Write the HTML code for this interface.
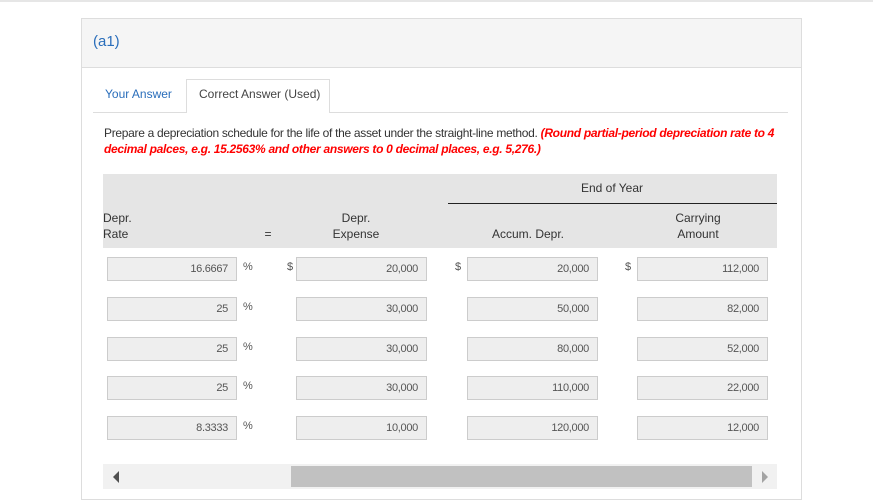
<!DOCTYPE html>
<html><head><style>
body{margin:0;width:873px;height:496px;background:#fff;font-family:"Liberation Sans",sans-serif;position:relative;overflow:hidden}
.a{position:absolute}
.in{position:absolute;height:22px;background:#eee;border:1px solid #ccc;font-size:11px;color:#555;text-align:right;line-height:22px;padding-right:8px;box-sizing:content-box;letter-spacing:-0.3px}
.s{position:absolute;font-size:11px;color:#555}
.h{position:absolute;font-size:12px;color:#333;text-align:center;line-height:16px}
</style></head><body>
<div class="a" style="left:0;top:0;width:873px;height:2px;background:#e6e6e6"></div>
<div class="a" style="left:81px;top:18px;width:719px;height:480px;border:1px solid #ddd;background:#fff"></div>
<div class="a" style="left:82px;top:19px;width:719px;height:48px;background:#f5f5f5;border-bottom:1px solid #ddd"></div>
<div class="a" style="left:93px;top:33px;font-size:15px;color:#2a6ebb">(a1)</div>
<div class="a" style="left:105px;top:87px;font-size:12px;color:#2a6ebb">Your Answer</div>
<div class="a" style="left:186px;top:79px;width:144px;height:34px;border:1px solid #ddd;border-bottom:none;background:#fff;box-sizing:border-box;z-index:2"></div>
<div class="a" style="left:199px;top:87px;font-size:12px;color:#444;z-index:3">Correct Answer (Used)</div>
<div class="a" style="left:93px;top:112px;width:695px;height:1px;background:#ddd"></div>
<div class="a" style="left:104px;top:125px;width:676px;font-size:12px;line-height:16px;color:#333;letter-spacing:-0.3px">Prepare a depreciation schedule for the life of the asset under the straight-line method. <b><i style="color:#f00">(Round partial-period depreciation rate to 4 decimal palces, e.g. 15.2563% and other answers to 0 decimal places, e.g. 5,276.)</i></b></div>
<div class="a" style="left:103px;top:174px;width:674px;height:74px;background:#e5e5e5"></div>
<div class="a" style="left:448px;top:203px;width:329px;height:1px;background:#222"></div>
<div class="h" style="left:562px;top:180px;width:100px">End of Year</div>
<div class="h" style="left:103px;top:210px;text-align:left">Depr.<br>Rate</div>
<div class="h" style="left:258px;top:226px;width:20px">=</div>
<div class="h" style="left:316px;top:210px;width:80px">Depr.<br>Expense</div>
<div class="h" style="left:478px;top:226px;width:100px">Accum. Depr.</div>
<div class="h" style="left:658px;top:210px;width:80px">Carrying<br>Amount</div>
<div class="s" style="left:287px;top:261px">$</div>
<div class="s" style="left:455px;top:261px">$</div>
<div class="s" style="left:625px;top:261px">$</div>
<div class="in" style="left:107px;top:257px;width:120px">16.6667</div>
<div class="in" style="left:296px;top:257px;width:121px">20,000</div>
<div class="in" style="left:467px;top:257px;width:121px">20,000</div>
<div class="in" style="left:637px;top:257px;width:121px">112,000</div>
<div class="in" style="left:107px;top:297px;width:120px">25</div>
<div class="in" style="left:296px;top:297px;width:121px">30,000</div>
<div class="in" style="left:467px;top:297px;width:121px">50,000</div>
<div class="in" style="left:637px;top:297px;width:121px">82,000</div>
<div class="in" style="left:107px;top:337px;width:120px">25</div>
<div class="in" style="left:296px;top:337px;width:121px">30,000</div>
<div class="in" style="left:467px;top:337px;width:121px">80,000</div>
<div class="in" style="left:637px;top:337px;width:121px">52,000</div>
<div class="in" style="left:107px;top:376px;width:120px">25</div>
<div class="in" style="left:296px;top:376px;width:121px">30,000</div>
<div class="in" style="left:467px;top:376px;width:121px">110,000</div>
<div class="in" style="left:637px;top:376px;width:121px">22,000</div>
<div class="in" style="left:107px;top:416px;width:120px">8.3333</div>
<div class="in" style="left:296px;top:416px;width:121px">10,000</div>
<div class="in" style="left:467px;top:416px;width:121px">120,000</div>
<div class="in" style="left:637px;top:416px;width:121px">12,000</div>
<div class="s" style="left:243px;top:261px">%</div>
<div class="s" style="left:243px;top:301px">%</div>
<div class="s" style="left:243px;top:341px">%</div>
<div class="s" style="left:243px;top:380px">%</div>
<div class="s" style="left:243px;top:420px">%</div>
<div class="a" style="left:103px;top:464px;width:674px;height:25px;background:#f1f1f1"></div>
<div class="a" style="left:291px;top:466px;width:461px;height:21px;background:#c1c1c1"></div>
<div class="a" style="left:113px;top:471px;width:0;height:0;border-top:6px solid transparent;border-bottom:6px solid transparent;border-right:6px solid #505050"></div>
<div class="a" style="left:762px;top:471px;width:0;height:0;border-top:6px solid transparent;border-bottom:6px solid transparent;border-left:6px solid #a3a3a3"></div>
</body></html>
